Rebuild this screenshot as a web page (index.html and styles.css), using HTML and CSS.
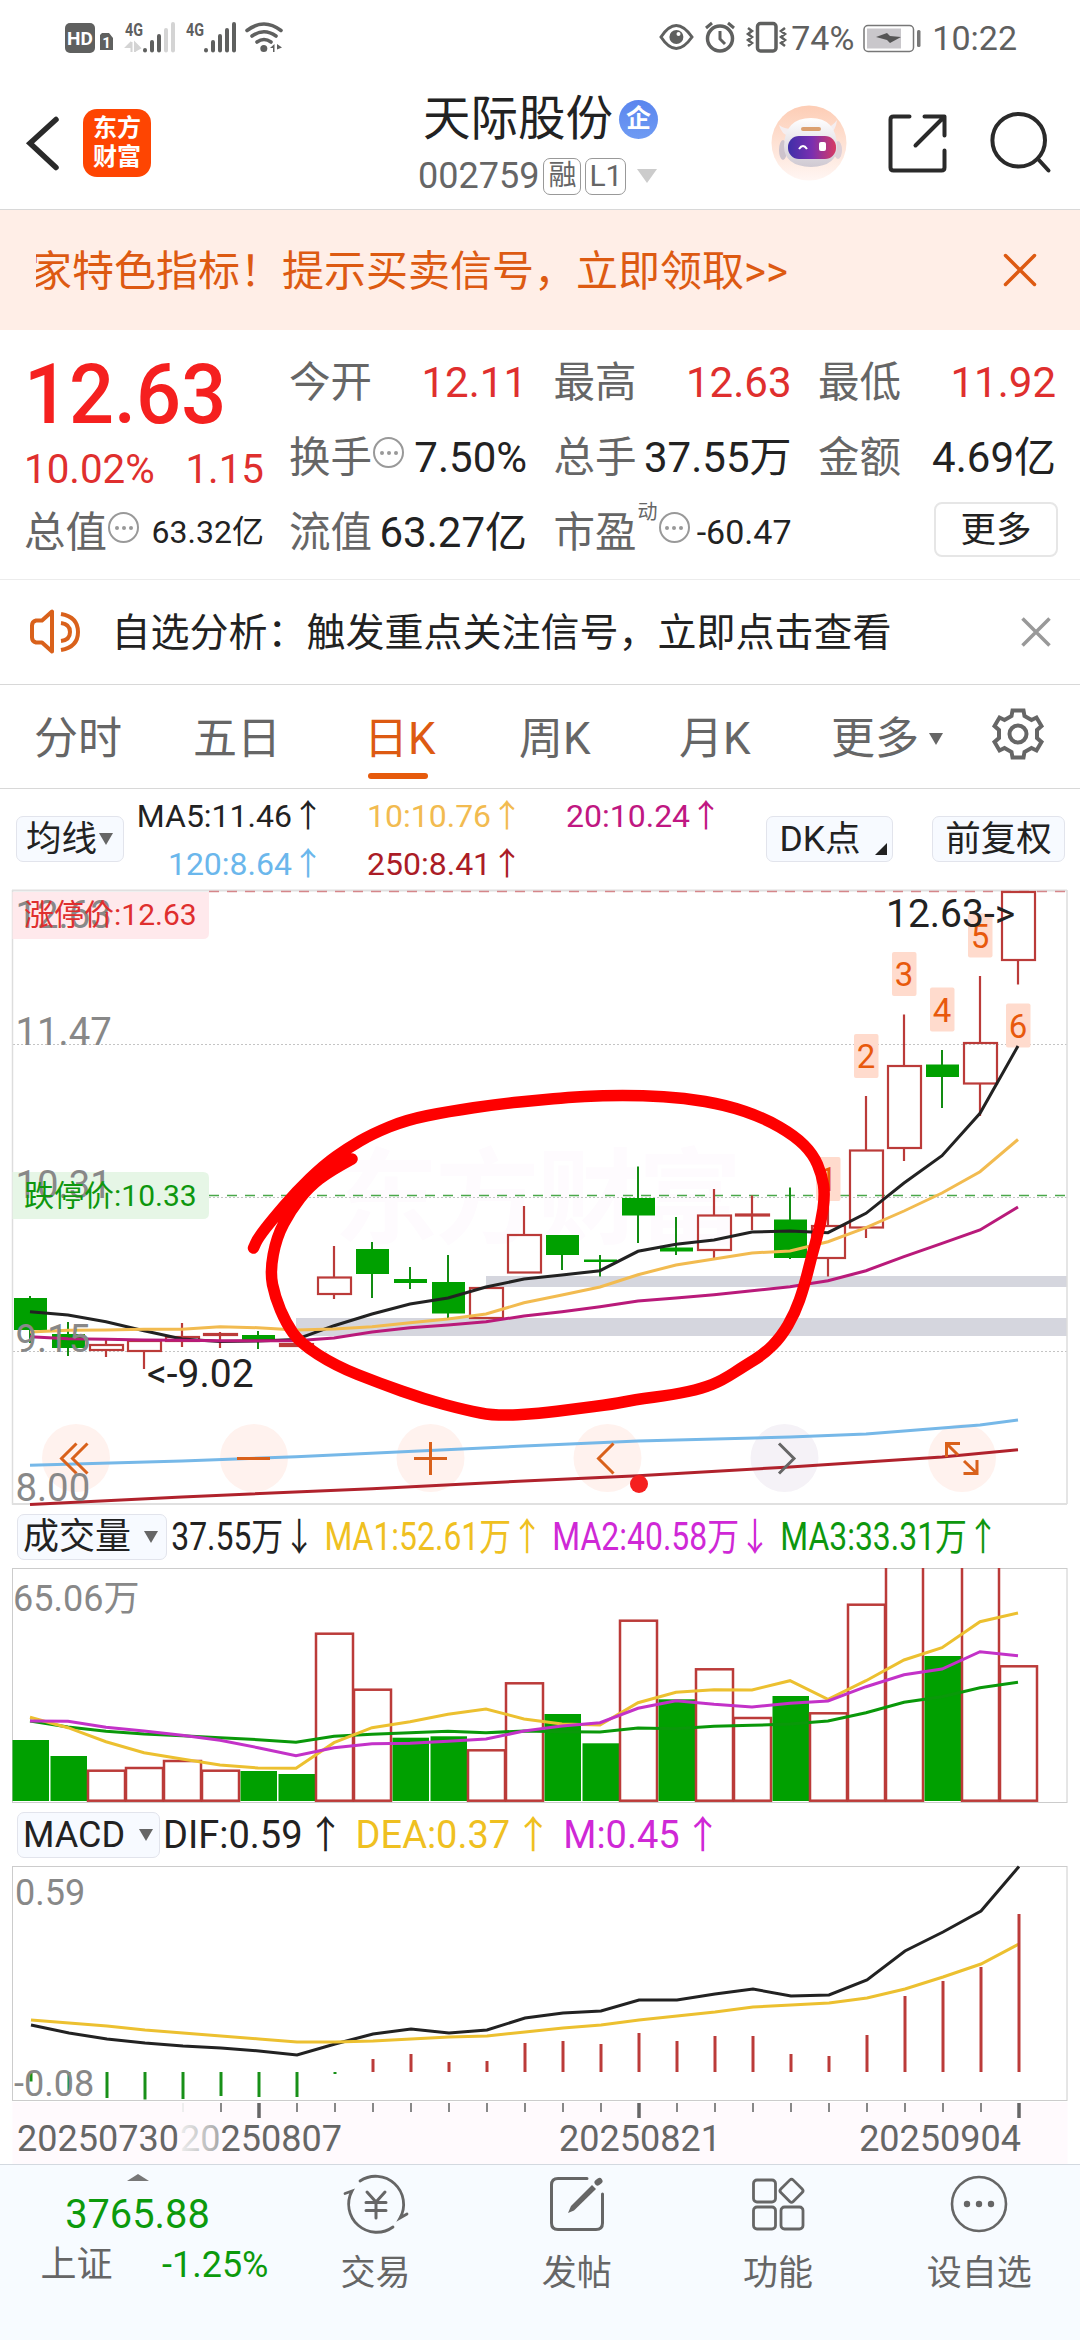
FILE: index.html
```html
<!DOCTYPE html>
<html lang="zh-CN">
<head>
<meta charset="utf-8">
<title>天际股份 002759</title>
<link rel="stylesheet" href="styles.css">
</head>
<body>
<div class="screen">
  <header class="top">
    <div class="status">
      <svg class="status-left" width="220" height="40" viewBox="60 18 220 40">
        <rect x="65" y="23" width="30" height="30" rx="5" fill="#5f605f"/>
        <text class="st-hd" x="80" y="45" text-anchor="middle">HD</text>
        <path d="M102 33h7l4 5v12h-13V35z" fill="#5f605f"/>
        <text class="st-sim" x="106.500" y="48" text-anchor="middle">1</text>
        <text class="st-4g" x="125" y="35.500" textLength="18" lengthAdjust="spacingAndGlyphs">4G</text>
        <g stroke="#5f605f" stroke-width="4" stroke-linecap="round">
          <path d="M145 50v.5M152 42v8.500M159 36v14.500"/>
          <path d="M166 30v20.500M173 24v26.500" stroke="#d4d4d4"/>
          <path d="M206 50v.5M213 42v8.500M220 36v14.500M227 30v20.500M234 24v26.500"/>
        </g>
        <path d="M131.500 42v10M131.500 42l-5 5h5M135 52v-9l5 5-5 3" stroke="#d4d4d4" stroke-width="2" fill="#d4d4d4"/>
        <text class="st-4g" x="186" y="35.500" textLength="18" lengthAdjust="spacingAndGlyphs">4G</text>
        <g fill="none" stroke="#5f605f" stroke-width="3.600" stroke-linecap="round">
          <path d="M247 30.500q17-13 34 0M252 36q12-8.500 24 0M257 42q7-5 14 0"/>
        </g>
        <circle cx="263.800" cy="48.500" r="3.500" fill="#5f605f"/>
        <path d="M274.500 44v8h-1.500v-4h-3zM277 52v-8l5 3.500-5 2" fill="#5f605f"/>
      </svg>
      <div class="status-right">
        <svg class="modes" width="132" height="40" viewBox="656 18 132 40" fill="none" stroke="#5f605f" stroke-width="3">
          <path d="M661 37q15-23 31 0q-16 23-31 0z"/>
          <circle cx="676.400" cy="37" r="7" fill="#5f605f" stroke="none"/><circle cx="678.500" cy="34" r="2" fill="#fff" stroke="none"/>
          <circle cx="720" cy="38.500" r="12.500" stroke-width="3.500"/><path d="M720 31v8l5 5M706 28l6-5M734 28l-6-5"/>
          <rect x="757.500" y="23.500" width="18.500" height="27.500" rx="3" stroke-width="3.500"/>
          <path d="M748 28l4 3-4 3 4 3-4 3 4 3-4 3M785 28l-4 3 4 3-4 3 4 3-4 3 4 3" stroke-width="2.500"/>
        </svg>
        <span class="st-text">74%</span>
        <svg class="battery" width="58" height="30" viewBox="864 22 58 30">
          <rect x="865" y="24.500" width="49.500" height="26" rx="4" fill="#fff" stroke="#777" stroke-width="1.500"/>
          <rect x="868" y="27.500" width="34" height="20" fill="#c9c7cb"/>
          <path d="M877 36l11-4 3 3 11 1-11 6-3-3z" fill="#555"/>
          <rect x="918" y="29" width="3.500" height="17" rx="1.500" fill="#777"/>
        </svg>
        <span class="st-text">10:22</span>
      </div>
    </div>
    <div class="titlebar">
      <div class="tb-left">
        <svg width="40" height="60" viewBox="24 112 40 60" fill="none" stroke="#2a2a2a" stroke-width="5.500" stroke-linecap="round"><path d="M56 118.500L30 142.300L56 166.500" stroke-linejoin="miter"/></svg>
        <div class="logo"><span>东方</span><span>财富</span></div>
      </div>
      <div class="tb-mid">
        <div class="name"><span>天际股份</span><i class="qi">企</i></div>
        <div class="code"><span>002759</span><b class="box rong">融</b><b class="box l1">L1</b><i class="drop"></i></div>
      </div>
      <div class="tb-right">
        <svg width="78" height="78" viewBox="-39 -39 78 78">
          <defs>
            <linearGradient id="halo" x1="0" y1="0" x2="0" y2="1"><stop offset="0" stop-color="#fdcdb5"/><stop offset="1" stop-color="#fff6f3"/></linearGradient>
            <linearGradient id="visor" x1="0" y1="0" x2="1" y2="0"><stop offset="0" stop-color="#3e2fa8"/><stop offset=".5" stop-color="#7a2fb0"/><stop offset="1" stop-color="#d83a63"/></linearGradient>
            <linearGradient id="helmet" x1="0" y1="0" x2="0" y2="1"><stop offset="0" stop-color="#fff"/><stop offset="1" stop-color="#cfc9d2"/></linearGradient>
          </defs>
          <circle r="37.500" fill="url(#halo)"/>
          <path d="M-30-18q3 10 9 10l4-6q-8 0-13-4zM28-23q-1 10-8 15l-5-6q8-2 13-9z" fill="#f5eef0"/>
          <ellipse cx="-26" cy="7" rx="4" ry="10" fill="#cdc3cc"/><ellipse cx="29" cy="7" rx="4" ry="9" fill="#ddd0d8"/>
          <path d="M-25 3Q-24-25 2-25Q27-25 28 3Q29 23 2 24Q-25 23-25 3z" fill="url(#helmet)"/>
          <rect x="-8" y="-16" width="20" height="4" rx="2" fill="#dba070"/>
          <rect x="-21" y="-7" width="48" height="23" rx="11" fill="url(#visor)"/>
          <path d="M-10 6q4-6 8 0" stroke="#fff" stroke-width="2" fill="none"/><rect x="10" y="-1" width="7" height="9" rx="2" fill="#fff"/>
        </svg>
        <svg class="share" width="64" height="64" viewBox="884.500 110.500 64 64" fill="none" stroke="#2a2a2a" stroke-width="4" stroke-linecap="round" stroke-linejoin="round"><path d="M909 116h-16q-3 0-3 3v48q0 3 3 3h48q3 0 3-3v-17M924 116h20v19M943 117l-28 28"/></svg>
        <svg width="64" height="64" viewBox="988 110.500 64 64" fill="none" stroke="#2a2a2a" stroke-width="4" stroke-linecap="round"><circle cx="1018.700" cy="139.700" r="26.300"/><path d="M1038 158.500l10.500 11.500"/></svg>
      </div>
    </div>
  </header>

  <div class="banner">
    <div class="marquee"><span>家特色指标！提示买卖信号，立即领取&gt;&gt;</span></div>
    <svg width="34" height="34" viewBox="-17 -17 34 34" stroke="#dd5a12" stroke-width="3.500" stroke-linecap="round"><path d="M-14.500-14.500l29 29M14.500-14.500l-29 29"/></svg>
  </div>

  <section class="quote">
    <div class="col-main">
      <div class="price">12.63</div>
      <div class="chg"><span>10.02%</span><span>1.15</span></div>
      <div class="cell"><span class="lab">总值</span><i class="tip"><i></i><i></i><i></i></i><span class="val sm">63.32亿</span></div>
    </div>
    <div class="stats">
      <div class="cell"><span class="lab">今开</span><span class="val up">12.11</span></div>
      <div class="cell"><span class="lab">最高</span><span class="val up">12.63</span></div>
      <div class="cell"><span class="lab">最低</span><span class="val up">11.92</span></div>
      <div class="cell"><span class="lab">换手</span><i class="tip"><i></i><i></i><i></i></i><span class="val">7.50%</span></div>
      <div class="cell"><span class="lab">总手</span><span class="val">37.55万</span></div>
      <div class="cell"><span class="lab">金额</span><span class="val">4.69亿</span></div>
      <div class="cell"><span class="lab">流值</span><span class="val">63.27亿</span></div>
      <div class="cell"><span class="lab">市盈</span><sup>动</sup><i class="tip"><i></i><i></i><i></i></i><span class="val md">-60.47</span></div>
      <div class="cell"><button class="more">更多</button></div>
    </div>
  </section>

  <div class="notice">
    <svg width="52" height="46" viewBox="29 609 52 46" fill="none" stroke="#d9611b" stroke-width="4" stroke-linejoin="round"><path d="M52 611.500v40l-10-9h-6q-4-1-4-5v-12q0-4 4-5h6z"/><path d="M61 614q17 3 17 18t-17 18M61 623q9 1 9 9t-9 9"/></svg>
    <span>自选分析：触发重点关注信号，立即点击查看</span>
    <svg width="32" height="32" viewBox="-16 -16 32 32" stroke="#999" stroke-width="3.500"><path d="M-13.500-13.500l27 27M13.500-13.500l-27 27"/></svg>
  </div>

  <nav class="tabs">
    <span>分时</span><span>五日</span><span class="on">日K</span><span>周K</span><span>月K</span><span>更多<i class="tri"></i></span>
    <svg width="54" height="54" viewBox="-27 -27 54 54" fill="none" stroke="#666" stroke-width="4"><path d="M-5.500-23.500L-6.500-18L-13.500-14L-18.500-16.500L-23.500-8L-19-4V4L-23.500 8L-18.500 16.500L-13.500 14L-6.500 18L-5.500 23.500H5.500L6.500 18L13.500 14L18.500 16.500L23.500 8L19 4V-4L23.500-8L18.500-16.500L13.500-14L6.500-18L5.500-23.500z"/><circle r="8.500"/></svg>
  </nav>

  <div class="ma-row">
    <button class="pill p-ma">均线<i class="tri"></i></button>
    <div class="ma-grid">
      <span class="k r">MA5:11.46↑</span><span class="y">10:10.76↑</span><span class="m">20:10.24↑</span>
      <span class="b r">120:8.64↑</span><span class="d">250:8.41↑</span>
    </div>
    <button class="pill p-dk">DK点<i class="corner"></i></button>
    <button class="pill p-fq">前复权</button>
  </div>

  <svg id="kline" class="chart" width="1080" height="618" viewBox="0 889 1080 618"></svg>

  <div class="legend">
    <button class="pill p-vol">成交量<i class="tri"></i></button>
    <div class="vals narrow"><span class="k">37.55万↓</span><span class="vy">MA1:52.61万↑</span><span class="vm">MA2:40.58万↓</span><span class="vg">MA3:33.31万↑</span></div>
  </div>

  <svg id="volume" class="chart" width="1080" height="237" viewBox="0 1567 1080 237"></svg>

  <div class="legend macd-legend">
    <button class="pill p-macd">MACD<i class="tri"></i></button>
    <div class="vals"><span class="k">DIF:0.59<em>↑</em></span><span class="vy">DEA:0.37<em>↑</em></span><span class="vm">M:0.45<em>↑</em></span></div>
  </div>

  <svg id="macd" class="chart" width="1080" height="299" viewBox="0 1865 1080 299"></svg>

  <footer class="bottom">
    <div class="index">
      <i class="caret"></i>
      <div class="pt">3765.88</div>
      <div class="idx"><span>上证</span><span class="g">-1.25%</span></div>
    </div>
    <div class="item">
      <svg width="66" height="62" viewBox="-33 -31 66 62" fill="none" stroke="#666" stroke-width="2.800" stroke-linecap="round"><path d="M-16-23A28 28 0 0 1 24 14L31 10M17 23A28 28 0 0 1-24-13L-31-10.500"/><path d="M-9-12L0-2L9-12M0-2V14M-10-1.500H10M-10 6.500H10" stroke-width="3"/></svg>
      <span>交易</span>
    </div>
    <div class="item">
      <svg width="66" height="62" viewBox="-33 -31 66 62" fill="none" stroke="#666" stroke-width="3" stroke-linecap="round"><path d="M10-25.500H-19q-6.500 0-6.500 6.500V19q0 6.500 6.500 6.500H19q6.500 0 6.500-6.500V-10"/><path d="M-9 9L-6 2L15-19L19-15L-3 6.500z" fill="#666" stroke="none"/><path d="M20.500-21.500l2-1.500" stroke-width="6"/></svg>
      <span>发帖</span>
    </div>
    <div class="item">
      <svg width="66" height="62" viewBox="-33 -31 66 62" fill="none" stroke="#666" stroke-width="2.800"><rect x="-24.500" y="-24" width="22" height="22" rx="3.500"/><rect x="-24.500" y="3" width="22" height="22" rx="3.500"/><rect x="3" y="3" width="22" height="22" rx="3.500"/><rect x="4.700" y="-22" width="17.600" height="17.600" rx="2.500" transform="rotate(45 13.500 -13.200)"/></svg>
      <span>功能</span>
    </div>
    <div class="item">
      <svg width="66" height="62" viewBox="-33 -31 66 62" fill="#666"><circle r="27" fill="none" stroke="#666" stroke-width="2.600"/><circle cx="-12" r="3.200"/><circle r="3.200"/><circle cx="12" r="3.200"/></svg>
      <span>设自选</span>
    </div>
  </footer>
</div>
<script src="charts.js"></script>
</body>
</html>
```
FILE: styles.css
```css
* { box-sizing: border-box; }
body { margin: 0; background: #fff; font-family: Roboto, "Noto Sans CJK SC", sans-serif; color: #222; }
i, em { font-style: normal; }
svg { display: block; flex: none; }
button { font: inherit; color: inherit; padding: 0; margin: 0; }
.screen { width: 1080px; height: 2340px; display: flex; flex-direction: column; overflow: hidden; }

.top { height: 210px; border-bottom: 1px solid #d8d8d8; }
.status { height: 76px; padding: 0 63px 0 60px; display: flex; justify-content: space-between; align-items: center; }
.status-left, .status-right { overflow: visible; }
.status-right { display: flex; align-items: center; color: #5f605f; }
.modes { margin-right: -1px; }
.st-text { font-size: 34px; line-height: 40px; padding-left: 4px; }
.battery { margin: 0 7px 0 9px; }
.st-hd { font: bold 19px Roboto, sans-serif; fill: #fff; }
.st-sim { font: bold 15px Roboto, sans-serif; fill: #fff; }
.st-4g { font: bold 19px Roboto, sans-serif; fill: #5f605f; }

.titlebar { height: 133px; display: grid; grid-template-columns: 1fr 260px 1fr; align-items: center; }
.tb-left { display: flex; align-items: center; gap: 19px; padding-left: 24px; }
.logo { width: 68px; height: 68px; border-radius: 14px; background: #fe4502; color: #fff; font-weight: 700; font-size: 24px; line-height: 29px; display: flex; flex-direction: column; align-items: center; justify-content: center; }
.tb-mid { display: flex; flex-direction: column; white-space: nowrap; padding-top: 3px; }
.name { display: flex; align-items: center; gap: 6px; font-size: 47.500px; line-height: 64px; padding-left: 13px; }
.qi { width: 39px; height: 39px; border-radius: 50%; background: linear-gradient(#5a85ee, #6f9bf3); color: #fff; font-size: 25px; line-height: 38px; font-weight: 700; text-align: center; }
.code { display: flex; align-items: center; font-size: 36px; line-height: 50px; color: #666; padding-left: 8px; }
.box { height: 37px; border: 1.500px solid #999; border-radius: 7px; font-weight: 400; text-align: center; line-height: 34px; }
.rong { width: 38px; font-size: 28px; margin-left: 4px; }
.l1 { width: 41px; font-size: 30px; margin-left: 4px; }
.drop { margin-left: 11px; border: 10.500px solid transparent; border-top: 14px solid #ccc; border-bottom: 0; }
.tb-right { display: flex; align-items: center; justify-content: flex-end; gap: 37px; padding-right: 28px; }
.share { margin-right: 2.500px; }

.banner { height: 120px; background: #ffeee7; display: flex; align-items: center; justify-content: space-between; padding: 0 43px 0 36px; color: #dd5a12; }
.marquee { overflow: hidden; width: 760px; font-size: 42px; line-height: 60px; white-space: nowrap; }
.marquee span { display: block; margin: 4px 0 0 -6px; }

.quote { height: 250px; border-bottom: 1px solid #ececec; padding: 14px 25px 0 24px; display: flex; }
.col-main { width: 240px; margin-right: 25px; flex: none; }
.price { height: 94px; line-height: 102px; font-size: 83px; font-weight: 500; color: #f5201f; transform: scaleX(.955); transform-origin: left; white-space: nowrap; }
.chg { height: 56px; line-height: 63px; font-size: 40.300px; color: #df2f2e; display: flex; justify-content: space-between; }
.stats { flex: 1; display: grid; grid-template-columns: repeat(3, 238px); column-gap: 26.500px; grid-auto-rows: 75px; }
.cell { height: 75px; display: flex; align-items: center; line-height: 75px; white-space: nowrap; }
.lab { font-size: 41.500px; color: #666; padding-top: 2px; }
.val { font-size: 42px; color: #222; margin-left: auto; padding-top: 1px; }
.val.up { color: #df2f2e; }
.val.sm { font-size: 32px; }
.val.md { font-size: 34px; }
.tip { width: 31px; height: 31px; border: 2px solid #999; border-radius: 50%; display: flex; align-items: center; justify-content: center; gap: 3px; margin: 0 0 8px 1px; }
.tip i { width: 4px; height: 4px; border-radius: 50%; background: #999; }
.cell sup { font-size: 20px; line-height: 20px; color: #666; align-self: flex-start; padding-top: 8px; margin-left: 1px; vertical-align: baseline; }
.more { margin-left: auto; width: 124px; height: 55px; border: 2px solid #e6e6e6; border-radius: 8px; background: #fff; font-size: 35.500px; line-height: 53px; margin-bottom: 4px; margin-right: -2px; }

.notice { height: 105px; border-bottom: 1px solid #d8d8d8; display: flex; align-items: center; padding: 0 28px 0 29px; font-size: 39px; }
.notice span { margin: 2px auto 0 30.500px; line-height: 60px; }

.tabs { height: 104px; border-bottom: 1px solid #d8d8d8; display: grid; grid-template-columns: 159px 171px 155px 160px 152px 160px 54px; align-items: center; padding: 0 34px 5px; font-size: 44px; color: #666; }
.tabs span { display: flex; align-items: center; line-height: 64px; margin-top: 10px; gap: 10px; }
.tabs .on { color: #dd5a12; position: relative; }
.tabs .on::after { content: ""; position: absolute; left: 4px; width: 60px; height: 6px; top: 66px; border-radius: 3px; background: #e65a0c; }
.tri { border: 7.500px solid transparent; border-top: 12px solid #666; border-bottom: 0; }

.ma-row { height: 100px; display: flex; align-items: center; padding: 0 15px 0 16px; }
.pill { height: 46px; border: 1.500px solid #e2e4ec; border-radius: 7px; background: #f7faff; font-size: 35.500px; line-height: 44px; display: flex; align-items: center; white-space: nowrap; flex: none; }
.p-ma { width: 108px; padding-left: 9px; gap: 2px; }
.p-dk { width: 127px; padding-left: 13px; position: relative; }
.corner { position: absolute; right: 5px; bottom: 6px; border-left: 12px solid transparent; border-bottom: 12px solid #222; }
.p-fq { width: 133px; margin-left: auto; justify-content: center; }
.ma-grid { display: grid; grid-template-columns: 200px 199px 1fr; row-gap: 0; font-size: 32px; line-height: 48px; flex: none; width: 641.500px; padding-top: 1px; white-space: nowrap; }
.ma-grid .y, .ma-grid .d, .ma-grid .m { padding-left: 43px; }
.r { text-align: right; }
.k { color: #222; } .y { color: #f2bb50; } .m { color: #c01782; } .b { color: #6bb7ec; } .d { color: #ab1c26; }
.vy { color: #efc021; } .vm { color: #cf28d6; } .vg { color: #0e970e; }

.legend { height: 60px; padding-left: 17px; display: flex; align-items: center; }
.macd-legend { height: 61px; }
.p-vol { width: 150px; padding-left: 5px; gap: 13px; font-size: 36px; }
.p-macd { width: 143px; padding-left: 5px; gap: 14px; font-size: 36px; }
.vals { display: flex; font-size: 38px; line-height: 56px; white-space: nowrap; gap: 11px; padding-left: 3px; }
.vals.narrow { transform: scaleX(.84); transform-origin: left; gap: 11px; padding-left: 5px; }
.vals em { margin-left: 4px; }

.chart .axis { font-size: 38.300px; fill: #888; }
.chart .date { font-size: 36px; fill: #666; }
.chart .mark { font-size: 39px; fill: #222; }
.chart .tag { font-size: 30px; }
.chart .count { font-size: 33px; fill: #e8590c; }
.chart .wm { font-size: 104px; font-weight: 700; fill: #fefbfe; }

.bottom { height: 176px; background: #f7fbff; border-top: 1px solid #d3d9e0; display: flex; color: #666; }
.index { width: 275px; display: flex; flex-direction: column; align-items: center; }
.caret { margin-top: 9px; border: 11px solid transparent; border-bottom: 7px solid #777; border-top: 0; }
.pt { font-size: 39.800px; line-height: 46px; margin-top: 11px; color: #0c9a0c; }
.idx { width: 228px; margin-left: 34px; display: flex; justify-content: space-between; font-size: 36px; line-height: 50px; margin-top: 2px; }
.g { color: #0c9a0c; }
.item { flex: 1; display: flex; flex-direction: column; align-items: center; padding-top: 8px; font-size: 35px; line-height: 50px; }
.item span { margin-top: 14px; }
```
FILE: charts.js
```js
const STEP = 38;
const GREEN = '#00a000';
const RED = '#bb3b39';
const line = (pts, color, w = 3, x0 = 30) =>
  `<polyline fill="none" stroke="${color}" stroke-width="${w}" points="${pts.map((y, i) => (x0 + i * STEP) + ',' + y).join(' ')}"/>`;
const sparse = (pts, color) =>
  `<polyline fill="none" stroke="${color}" stroke-width="3" points="${pts.map(([i, y]) => (30 + i * STEP) + ',' + y).join(' ')}"/>`;
const text = (cls, x, y, s, extra = '') => `<text class="${cls}" x="${x}" y="${y}" ${extra}>${s}</text>`;

/* Candles: [direction, high, body top, body bottom, low] */
const candles = [
  ['g', 1296, 1298, 1330, 1343], ['g', 1322, 1334, 1348, 1356], ['r', 1339, 1345, 1350, 1357], ['r', 1341, 1341, 1351, 1369],
  ['r', 1323, 1337, 1341, 1347], ['r', 1332, 1334, 1335, 1348], ['g', 1331, 1335, 1340, 1349], ['r', 1343, 1344, 1346, 1346],
  ['r', 1246, 1277.5, 1294, 1299], ['g', 1242, 1249, 1274, 1298], ['g', 1267, 1279, 1283, 1289], ['g', 1255, 1282, 1313.5, 1318],
  ['r', 1288, 1288, 1318, 1318], ['r', 1206, 1235, 1272.5, 1272.5], ['g', 1235, 1235, 1255, 1270], ['g', 1255, 1259.5, 1262, 1276.5],
  ['g', 1166.5, 1198, 1215.5, 1243], ['g', 1217, 1247.5, 1251.5, 1255], ['r', 1189, 1215.5, 1250, 1258], ['r', 1195.5, 1214.5, 1215.5, 1230],
  ['g', 1187.5, 1219.5, 1258, 1259], ['r', 1200, 1226, 1258, 1276.5], ['r', 1096, 1150.5, 1227.5, 1238], ['r', 1014.5, 1066, 1148, 1161],
  ['g', 1050, 1064.5, 1077, 1108], ['r', 976, 1043, 1083.5, 1116], ['r', 892, 892, 960, 984.5]
];

function drawKline() {
  let s = `<text class="wm" x="334" y="1236" textLength="408">东方财富</text>`;
  s += '<rect x="486" y="1276" width="581" height="11" fill="#d5d6de"/><rect x="296" y="1318" width="771" height="18" fill="#d5d6de"/>';
  for (const y of [1044.5, 1197.5, 1351.5]) s += `<path d="M13 ${y}H1067" stroke="#c4c4c4" stroke-dasharray="2 2"/>`;
  s += '<path d="M12.5 890V1504.500M1067 890V1504" stroke="#ddd" stroke-width="1.500" fill="none"/><path d="M12 890.500H1067M12 1504H1067" stroke="#e0e0e0" stroke-width="2"/>';
  s += '<path d="M209 891.500H1067" stroke="#d5868a" stroke-width="1.500" stroke-dasharray="10 8"/><path d="M209 1195.500H1067" stroke="#4aa84a" stroke-width="1.500" stroke-dasharray="10 8"/>';
  s += '<path d="M12.5 892H209v41q0 6-6 6H12.5z" fill="#ffe9ec"/><path d="M12.5 1172H203q6 0 6 6v35q0 6-6 6H12.500z" fill="#e6f6e6"/>';
  for (const [i, n, y] of [[21, 1, 1157], [22, 2, 1034], [23, 3, 952], [24, 4, 987.5], [25, 5, 913.5], [26, 6, 1003.5]]) {
    const x = 30 + i * STEP;
    s += `<rect x="${x - 12}" y="${y}" width="24.500" height="44" rx="2" fill="#ffdbcd"/>` + text('count', x, y + 34, n, 'text-anchor="middle"');
  }
  candles.forEach(([d, hi, t, b, lo], i) => {
    const x = 30 + i * STEP;
    if (d === 'g') {
      s += `<path d="M${x} ${hi}V${lo}" stroke="#128c12" stroke-width="2"/><rect x="${x - 16}" y="${t}" width="33" height="${b - t}" fill="${GREEN}"/>`;
    } else {
      s += `<path d="M${x} ${hi}V${t}M${x} ${b}V${lo}" stroke="${RED}" stroke-width="2.200"/><rect x="${x - 16}" y="${t}" width="33" height="${b - t}" fill="none" stroke="${RED}" stroke-width="2.200"/>`;
    }
  });
  [76, 254, 430.5, 607.5, 784.5, 962].forEach((x, i) => { s += `<circle cx="${x}" cy="1458" r="34" fill="${i === 4 ? '#f5f2f7' : '#fff2ee'}"/>`; });
  s += line([1311.7, 1315, 1321.7, 1330.7, 1339, 1341.5, 1341, 1339.5, 1325.7, 1314, 1304, 1298, 1287, 1279, 1275, 1270.7, 1251.3, 1244.3, 1240, 1232, 1231, 1232.7, 1213.3, 1183, 1155.7, 1113.3, 1046], '#222');
  s += line([1332, 1330.3, 1330, 1329.3, 1329.3, 1326.7, 1327.7, 1330, 1329, 1326.7, 1322.7, 1319, 1314, 1302.7, 1295, 1287, 1274.7, 1265, 1259, 1253, 1251, 1241.7, 1227.7, 1211, 1193, 1171.7, 1139.5], '#f2bb50');
  s += line([1336.7, 1338.7, 1339.3, 1340, 1340.3, 1340.7, 1340.7, 1340.7, 1338, 1332, 1327.7, 1325, 1321.7, 1316, 1311.7, 1306.7, 1301, 1298, 1294.7, 1290.7, 1286.7, 1280.7, 1270.7, 1256.7, 1243.3, 1230, 1207], '#b91a7a');
  s += sparse([[0, 1465.3], [4, 1461], [7, 1456.7], [13, 1446], [16, 1441], [20, 1437], [22, 1434], [25, 1425], [26, 1420]], '#76b8e8');
  s += sparse([[0, 1504.5], [4, 1497], [9, 1488.7], [13, 1481], [16, 1475.7], [20, 1467], [24, 1457], [26, 1449.7]], '#b0222c');
  s += '<circle cx="639" cy="1484" r="9" fill="#f5201f"/>';
  s += '<g fill="none" stroke="#d9611b" stroke-width="3"><path d="M76.500 1443.500L61.500 1458.500L76.500 1473.500M87.500 1443.500L72.500 1458.500L87.500 1473.500M237 1458.500H270M414 1458.500H447M430.500 1442V1475M613.500 1443.500L598.500 1458.500L613.500 1473.500"/><path d="M779 1443.500L794 1458.500L779 1473.500" stroke="#666"/><path d="M946.500 1457V1443.500H960M947 1444L958 1455M963.500 1473.500H977V1460M976.500 1473L964 1461"/></g>';
  for (const [y, t] of [[928, '12.63'], [1045, '11.47'], [1197.5, '10.31'], [1351.5, '9.15'], [1500.5, '8.00']]) s += text('axis', 15.5, y, t);
  s += text('tag', 24, 925, '涨停价:12.63', 'fill="#df2f2e"') + text('tag', 24, 1206, '跌停价:10.33', 'fill="#0e970e"');
  s += text('mark', 886, 927, '12.63-&gt;') + text('mark', 147, 1386.5, '&lt;-9.02');
  /* Freehand circle, smoothed through the midpoints */
  const p = [[352, 1159], [330, 1171], [309, 1187], [291, 1210], [276.5, 1237], [270, 1272], [275, 1297], [286, 1323], [300, 1343], [336, 1366], [379, 1383], [424, 1399], [465, 1410], [496, 1416], [540, 1413.5], [574, 1409], [614, 1404], [633, 1400], [674, 1394.5], [702, 1388.5], [722, 1380.500], [746, 1365], [764, 1354], [781, 1337], [795, 1313], [804, 1287], [812.500, 1253], [821, 1223], [825, 1195], [822, 1175], [813, 1154], [795, 1136], [764, 1118], [726, 1105], [684, 1098], [643, 1095.5], [602, 1095.5], [567, 1097.5], [540, 1100], [499, 1104], [448, 1111.5], [406, 1120], [372, 1134], [348, 1148], [324, 1165], [296, 1192], [272, 1220], [258, 1238], [253.5, 1248]];
  let d = `M${p[0]}`;
  for (let i = 1; i < p.length - 1; i++) d += `Q${p[i]} ${(p[i][0] + p[i + 1][0]) / 2},${(p[i][1] + p[i + 1][1]) / 2}`;
  d += `L${p[p.length - 1]}`;
  s += `<path d="${d}" fill="none" stroke="#fe0000" stroke-width="11.500" stroke-linecap="round" stroke-linejoin="round"/>`;
  document.getElementById('kline').innerHTML = s;
}

function drawVolume() {
  /* Bars taller than the pane start above its top edge and are clipped */
  const v = ['g1740', 'g1756', 'r1770.7', 'r1768', 'r1761', 'r1770.7', 'g1771', 'g1774', 'r1633.7', 'r1689.7', 'g1737.7', 'g1736.3', 'r1750.3', 'r1683.3', 'g1714', 'g1743.3', 'r1620.7', 'g1699.3', 'r1669.3', 'r1718', 'g1696', 'r1713.3', 'r1604.7', 'r1560', 'g1656', 'r1560', 'r1666.3'];
  let s = '<defs><clipPath id="pane"><rect x="12" y="1568" width="1056" height="236"/></clipPath></defs><rect x="12.500" y="1568.500" width="1054.500" height="234" fill="none" stroke="#ccc"/><g clip-path="url(#pane)">';
  v.forEach((b, i) => {
    const x = 30 + i * STEP, y = +b.slice(1);
    s += b[0] === 'g' ? `<rect x="${x - 17.5}" y="${y}" width="36.500" height="${1801 - y}" fill="${GREEN}"/>`
      : `<rect x="${x - 18}" y="${y}" width="37" height="${1800.7 - y}" fill="none" stroke="${RED}" stroke-width="2.500"/>`;
  });
  s += '</g>';
  s += line([1721, 1727, 1731.3, 1734, 1735.7, 1737.7, 1739.7, 1742.3, 1736.3, 1734.3, 1732.7, 1731.3, 1732.7, 1731, 1731.7, 1732, 1728, 1728.7, 1726.3, 1725.3, 1724, 1721, 1712.7, 1702.3, 1696.7, 1687.7, 1682.3], '#0a980a');
  s += line([1717.3, 1727.7, 1741.7, 1752.7, 1759, 1765, 1768, 1768.3, 1742.7, 1727.7, 1721.7, 1714.3, 1709, 1719, 1724, 1725, 1702.7, 1692.3, 1689.7, 1690, 1680.7, 1699.3, 1680.7, 1660, 1647.7, 1621.7, 1613], '#ecc030');
  s += line([1721, 1721.3, 1727.3, 1731, 1735.3, 1740.3, 1747.7, 1755.7, 1747.7, 1743.7, 1743.3, 1741.3, 1739, 1731, 1726, 1722.7, 1708.3, 1700.7, 1704.3, 1707, 1703.3, 1701, 1686.7, 1674.7, 1669, 1651.7, 1655.7], '#c332c8');
  s += text('axis', 13, 1611, '65.06万', 'style="font-size:36px"');
  document.getElementById('volume').innerHTML = s;
}

function drawMacd() {
  const h = [2081.5, 2091.5, 2098, 2099.5, 2099, 2096, 2097, 2097, 2074, 2059, 2054, 2062, 2061, 2043, 2041, 2044, 2033, 2041, 2036, 2036, 2054, 2056, 2035, 1996, 1981, 1967, 1914];
  let s = '<rect x="12.500" y="2102" width="1055" height="62" fill="#fffafd"/><rect x="12.500" y="1866.500" width="1054.500" height="234" fill="none" stroke="#ccc"/>';
  s += line([2025, 2033, 2039, 2043, 2046, 2048, 2051, 2055, 2044, 2034, 2029, 2033, 2030, 2018, 2013, 2011, 2000, 2000, 1994, 1989, 1996, 1995, 1980, 1951, 1932, 1911, 1866.5], '#222', 3, 31);
  s += line([2020, 2023, 2026, 2030, 2033, 2036, 2039, 2042, 2042, 2041, 2039, 2037, 2036, 2032, 2028, 2025, 2020, 2016, 2012, 2007, 2005, 2003, 1998, 1989, 1977, 1964, 1944], '#ecc030', 3, 31);
  h.forEach((y, i) => {
    const x = 31 + i * STEP;
    s += `<path d="M${x} 2072V${y}" stroke="${y > 2072 ? '#189018' : RED}" stroke-width="3"/>`;
    if (i >= 4) {
      const big = i % 10 === 6;
      s += `<path d="M${x} 2103V${big ? 2118 : 2112}" stroke="${i === 4 ? '#eee' : big ? '#666' : '#888'}" stroke-width="${big ? 3.5 : 2}"/>`;
    }
  });
  s += text('axis', 15, 1905, '0.59', 'style="font-size:36px"') + text('axis', 14, 2096, '-0.08', 'style="font-size:36px"');
  s += '<defs><linearGradient id="fade" gradientUnits="userSpaceOnUse" x1="180" y1="0" x2="236" y2="0"><stop offset="0" stop-color="#eee"/><stop offset=".7" stop-color="#aaa"/><stop offset=".72" stop-color="#666"/></linearGradient></defs>';
  s += text('date', 17, 2151, '20250730') + text('date', 180, 2151, '20250807', 'style="fill:url(#fade)"');
  s += text('date', 640, 2151, '20250821', 'text-anchor="middle"') + text('date', 1021, 2151, '20250904', 'text-anchor="end"');
  document.getElementById('macd').innerHTML = s;
}

drawKline();
drawVolume();
drawMacd();
```
